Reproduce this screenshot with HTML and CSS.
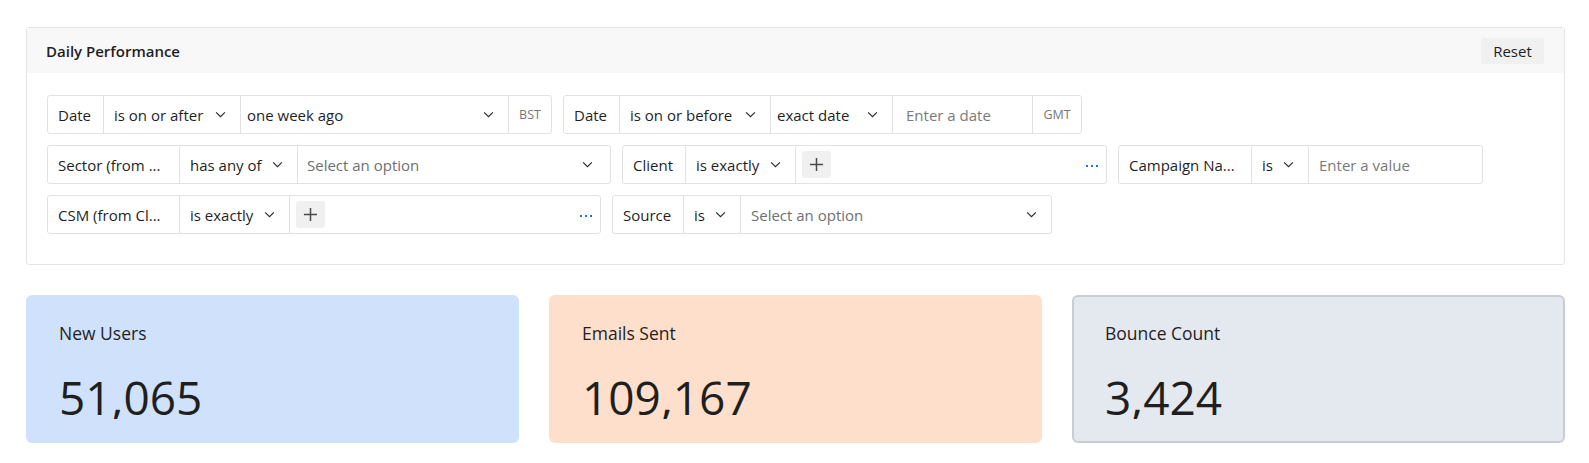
FILE: index.html
```html
<!DOCTYPE html>
<html lang="en">
<head>
<meta charset="utf-8">
<title>Daily Performance</title>
<link rel="stylesheet" href="styles.css">
</head>
<body>
<div class="page">
  <section class="panel">
    <header class="panel-head">
      <h2 class="panel-title">Daily Performance</h2>
      <button class="btn-reset">Reset</button>
    </header>
    <div class="panel-body">
      <div class="filter-row">
        <div class="filter">
          <div class="seg field w-date">Date</div>
          <div class="seg op w-op1">is on or after <svg class="chev" viewBox="0 0 12 8"><path d="M1 1.5l5 5 5-5"/></svg></div>
          <div class="seg value w-week pad-s">one week ago <svg class="chev" viewBox="0 0 12 8"><path d="M1 1.5l5 5 5-5"/></svg></div>
          <div class="seg tz w-bst">BST</div>
        </div>
        <div class="filter">
          <div class="seg field w-date">Date</div>
          <div class="seg op w-op2">is on or before <svg class="chev" viewBox="0 0 12 8"><path d="M1 1.5l5 5 5-5"/></svg></div>
          <div class="seg value w-exact pad-s">exact date <svg class="chev" viewBox="0 0 12 8"><path d="M1 1.5l5 5 5-5"/></svg></div>
          <div class="seg input w-date-in">Enter a date</div>
          <div class="seg tz w-gmt">GMT</div>
        </div>
      </div>
      <div class="filter-row">
        <div class="filter">
          <div class="seg field w-long">Sector (from ...</div>
          <div class="seg op w-any">has any of <svg class="chev" viewBox="0 0 12 8"><path d="M1 1.5l5 5 5-5"/></svg></div>
          <div class="seg value w-sel1 placeholder">Select an option <svg class="chev" viewBox="0 0 12 8"><path d="M1 1.5l5 5 5-5"/></svg></div>
        </div>
        <div class="filter">
          <div class="seg field w-client">Client</div>
          <div class="seg op w-exactly">is exactly <svg class="chev" viewBox="0 0 12 8"><path d="M1 1.5l5 5 5-5"/></svg></div>
          <div class="seg multi w-multi">
            <span class="add"><svg viewBox="0 0 16 16"><path d="M8 1v14M1 8h14"/></svg></span>
            <span class="dots"><i></i><i></i><i></i></span>
          </div>
        </div>
        <div class="filter">
          <div class="seg field w-camp">Campaign Na...</div>
          <div class="seg op w-is">is <svg class="chev" viewBox="0 0 12 8"><path d="M1 1.5l5 5 5-5"/></svg></div>
          <div class="seg input w-val">Enter a value</div>
        </div>
      </div>
      <div class="filter-row">
        <div class="filter">
          <div class="seg field w-long">CSM (from Cl...</div>
          <div class="seg op w-exactly">is exactly <svg class="chev" viewBox="0 0 12 8"><path d="M1 1.5l5 5 5-5"/></svg></div>
          <div class="seg multi w-multi">
            <span class="add"><svg viewBox="0 0 16 16"><path d="M8 1v14M1 8h14"/></svg></span>
            <span class="dots"><i></i><i></i><i></i></span>
          </div>
        </div>
        <div class="filter">
          <div class="seg field w-source">Source</div>
          <div class="seg op w-is">is <svg class="chev" viewBox="0 0 12 8"><path d="M1 1.5l5 5 5-5"/></svg></div>
          <div class="seg value w-multi placeholder">Select an option <svg class="chev" viewBox="0 0 12 8"><path d="M1 1.5l5 5 5-5"/></svg></div>
        </div>
      </div>
    </div>
  </section>

  <div class="cards">
    <div class="card card-blue">
      <div class="card-label">New Users</div>
      <div class="card-value">51,065</div>
    </div>
    <div class="card card-peach">
      <div class="card-label">Emails Sent</div>
      <div class="card-value">109,167</div>
    </div>
    <div class="card card-gray">
      <div class="card-label">Bounce Count</div>
      <div class="card-value">3,424</div>
    </div>
  </div>
</div>
</body>
</html>
```

FILE: styles.css
```css
* { box-sizing: border-box; }

html, body {
  margin: 0;
  background: #ffffff;
}

body {
  font-family: "Open Sans", "Noto Sans", "Liberation Sans", sans-serif;
  color: #1f1f1f;
  font-size: 15px;
}

.page {
  padding: 27px 24px 0 26px;
}

.panel {
  border: 1px solid #e4e4e4;
  border-radius: 3px;
  background: #fff;
}

.panel-head {
  height: 45px;
  background: #f8f8f8;
  display: flex;
  align-items: center;
  justify-content: space-between;
  padding: 1px 20px 0 19px;
}

.panel-title {
  margin: 0;
  font-size: 15px;
  font-weight: 600;
  color: #1f1f1f;
}

.btn-reset {
  font-family: inherit;
  font-size: 15px;
  color: #1f1f1f;
  background: #f0f0f0;
  border: none;
  border-radius: 3px;
  height: 26px;
  width: 63px;
  padding: 0;
}

.panel-body {
  padding: 22px 20px 30px;
  display: flex;
  flex-direction: column;
  gap: 11px;
}

.filter-row {
  display: flex;
  gap: 11px;
}

.filter {
  display: flex;
  height: 39px;
  border: 1px solid #e2e2e2;
  border-radius: 3px;
}

.seg {
  display: flex;
  align-items: center;
  padding: 0 10px;
  white-space: nowrap;
  border-left: 1px solid #e2e2e2;
  font-size: 15px;
  color: #1f1f1f;
}

.seg:first-child { border-left: none; }

.op, .value {
  justify-content: space-between;
  padding-right: 14px;
}

.pad-s { padding-left: 6px; }

.placeholder { color: #6f6f6f; }

.input {
  color: #7a7a7a;
  padding-left: 13px;
}

.tz {
  justify-content: center;
  font-size: 12.5px;
  color: #777;
  padding: 0;
}

.chev {
  width: 11px;
  height: 7px;
  fill: none;
  stroke: #2a2a2a;
  stroke-width: 1.3;
  margin-left: 8px;
  flex: none;
}

.w-date { width: 55px; }
.w-op1 { width: 137px; }
.w-week { width: 268px; }
.w-bst { width: 43px; }
.w-op2 { width: 151px; }
.w-exact { width: 122px; }
.w-date-in { width: 140px; }
.w-gmt { width: 49px; }
.w-long { width: 131px; }
.w-any { width: 118px; }
.w-sel1 { width: 313px; padding-left: 9px; padding-right: 17px; }
.w-client { width: 62px; }
.w-exactly { width: 110px; }
.w-multi { width: 311px; }
.w-camp { width: 132px; }
.w-is { width: 57px; }
.w-val { width: 174px; padding-left: 10px; }
.w-source { width: 70px; }

.multi {
  justify-content: space-between;
  padding: 0 8px 0 6px;
}

.add {
  width: 29px;
  height: 27px;
  background: #f0f0f0;
  border-radius: 3px;
  display: flex;
  align-items: center;
  justify-content: center;
}

.add svg {
  width: 15px;
  height: 15px;
  stroke: #4a4a4a;
  stroke-width: 1.6;
  fill: none;
}

.dots {
  display: flex;
  gap: 3px;
  align-items: center;
  margin-top: 2px;
}

.dots i {
  width: 2px;
  height: 2px;
  background: #1a73e8;
}

.cards {
  margin-top: 30px;
  display: grid;
  grid-template-columns: 1fr 1fr 1fr;
  gap: 30px;
}

.card {
  height: 148px;
  border-radius: 6px;
  padding: 26px 33px 0;
  overflow: hidden;
}

.card-blue { background: #d0e1fc; }
.card-peach { background: #fedfcb; }
.card-gray {
  background: #e4e8ef;
  border: 2px solid #c9cdd3;
  padding: 24px 31px 0;
}

.card-label {
  font-size: 17.5px;
  color: #1f1f1f;
  line-height: 24px;
}

.card-value {
  margin-top: 24px;
  font-size: 46px;
  line-height: 56px;
  height: 50px;
  overflow: hidden;
  color: #1f1f1f;
}
```
